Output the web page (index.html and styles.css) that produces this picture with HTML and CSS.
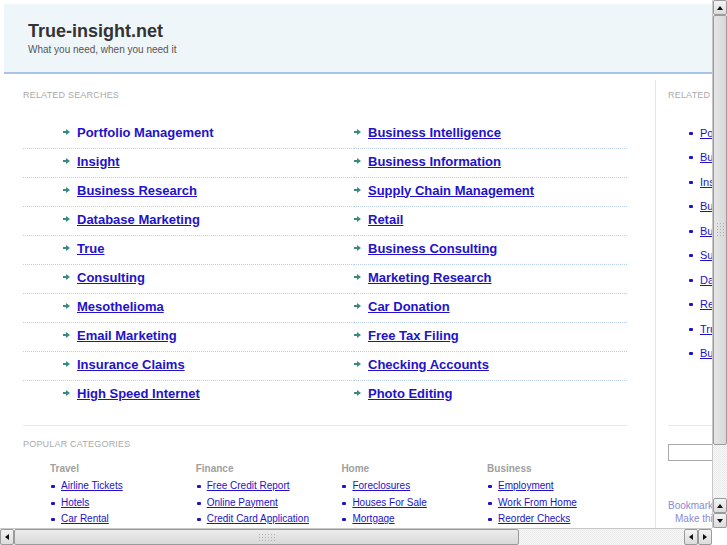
FILE: index.html
```html
<!DOCTYPE html>
<html lang="en">
<head>
    <meta charset="UTF-8">
    <title>True-insight.net</title>
    <link rel="stylesheet" href="styles.css">
</head>
<body>
    <div class="page">
        <div class="header">
            <h1>True-insight.net</h1>
            <p>What you need, when you need it</p>
        </div>
        <div class="main">
            <div class="content">
                <h2 class="label">Related Searches</h2>
                <ul class="searches">
                    <li><svg class="arrow" viewBox="0 0 7 6"><path d="M0 2h3V0l4 3-4 3V4H0z"/></svg><a class="active" href="#">Portfolio Management</a></li>
                    <li><svg class="arrow" viewBox="0 0 7 6"><path d="M0 2h3V0l4 3-4 3V4H0z"/></svg><a href="#">Business Intelligence</a></li>
                    <li><svg class="arrow" viewBox="0 0 7 6"><path d="M0 2h3V0l4 3-4 3V4H0z"/></svg><a href="#">Insight</a></li>
                    <li><svg class="arrow" viewBox="0 0 7 6"><path d="M0 2h3V0l4 3-4 3V4H0z"/></svg><a href="#">Business Information</a></li>
                    <li><svg class="arrow" viewBox="0 0 7 6"><path d="M0 2h3V0l4 3-4 3V4H0z"/></svg><a href="#">Business Research</a></li>
                    <li><svg class="arrow" viewBox="0 0 7 6"><path d="M0 2h3V0l4 3-4 3V4H0z"/></svg><a href="#">Supply Chain Management</a></li>
                    <li><svg class="arrow" viewBox="0 0 7 6"><path d="M0 2h3V0l4 3-4 3V4H0z"/></svg><a href="#">Database Marketing</a></li>
                    <li><svg class="arrow" viewBox="0 0 7 6"><path d="M0 2h3V0l4 3-4 3V4H0z"/></svg><a href="#">Retail</a></li>
                    <li><svg class="arrow" viewBox="0 0 7 6"><path d="M0 2h3V0l4 3-4 3V4H0z"/></svg><a href="#">True</a></li>
                    <li><svg class="arrow" viewBox="0 0 7 6"><path d="M0 2h3V0l4 3-4 3V4H0z"/></svg><a href="#">Business Consulting</a></li>
                    <li><svg class="arrow" viewBox="0 0 7 6"><path d="M0 2h3V0l4 3-4 3V4H0z"/></svg><a href="#">Consulting</a></li>
                    <li><svg class="arrow" viewBox="0 0 7 6"><path d="M0 2h3V0l4 3-4 3V4H0z"/></svg><a href="#">Marketing Research</a></li>
                    <li><svg class="arrow" viewBox="0 0 7 6"><path d="M0 2h3V0l4 3-4 3V4H0z"/></svg><a href="#">Mesothelioma</a></li>
                    <li><svg class="arrow" viewBox="0 0 7 6"><path d="M0 2h3V0l4 3-4 3V4H0z"/></svg><a href="#">Car Donation</a></li>
                    <li><svg class="arrow" viewBox="0 0 7 6"><path d="M0 2h3V0l4 3-4 3V4H0z"/></svg><a href="#">Email Marketing</a></li>
                    <li><svg class="arrow" viewBox="0 0 7 6"><path d="M0 2h3V0l4 3-4 3V4H0z"/></svg><a href="#">Free Tax Filing</a></li>
                    <li><svg class="arrow" viewBox="0 0 7 6"><path d="M0 2h3V0l4 3-4 3V4H0z"/></svg><a href="#">Insurance Claims</a></li>
                    <li><svg class="arrow" viewBox="0 0 7 6"><path d="M0 2h3V0l4 3-4 3V4H0z"/></svg><a href="#">Checking Accounts</a></li>
                    <li class="last"><svg class="arrow" viewBox="0 0 7 6"><path d="M0 2h3V0l4 3-4 3V4H0z"/></svg><a href="#">High Speed Internet</a></li>
                    <li class="last"><svg class="arrow" viewBox="0 0 7 6"><path d="M0 2h3V0l4 3-4 3V4H0z"/></svg><a href="#">Photo Editing</a></li>
                </ul>

                <div class="categories">
                    <h2 class="label">Popular Categories</h2>
                    <div class="cat-grid">
                        <div class="cat">
                            <h3>Travel</h3>
                            <ul>
                                <li><a href="#">Airline Tickets</a></li>
                                <li><a href="#">Hotels</a></li>
                                <li><a href="#">Car Rental</a></li>
                            </ul>
                        </div>
                        <div class="cat">
                            <h3>Finance</h3>
                            <ul>
                                <li><a href="#">Free Credit Report</a></li>
                                <li><a href="#">Online Payment</a></li>
                                <li><a href="#">Credit Card Application</a></li>
                            </ul>
                        </div>
                        <div class="cat">
                            <h3>Home</h3>
                            <ul>
                                <li><a href="#">Foreclosures</a></li>
                                <li><a href="#">Houses For Sale</a></li>
                                <li><a href="#">Mortgage</a></li>
                            </ul>
                        </div>
                        <div class="cat">
                            <h3>Business</h3>
                            <ul>
                                <li><a href="#">Employment</a></li>
                                <li><a href="#">Work From Home</a></li>
                                <li><a href="#">Reorder Checks</a></li>
                            </ul>
                        </div>
                    </div>
                </div>
            </div>

            <div class="sidebar">
                <h2 class="label">Related Searches</h2>
                <ul class="side-list">
                    <li><a href="#">Portfolio Management</a></li>
                    <li><a href="#">Business Intelligence</a></li>
                    <li><a href="#">Insight</a></li>
                    <li><a href="#">Business Information</a></li>
                    <li><a href="#">Business Research</a></li>
                    <li><a href="#">Supply Chain Management</a></li>
                    <li><a href="#">Database Marketing</a></li>
                    <li><a href="#">Retail</a></li>
                    <li><a href="#">True</a></li>
                    <li><a href="#">Business Consulting</a></li>
                </ul>
                <div class="search-box">
                    <input type="text">
                </div>
                <div class="bookmark">
                    <a href="#">Bookmark this page</a>
                    <a class="home" href="#">Make this your homepage</a>
                </div>
            </div>
        </div>
    </div>

    <!-- fake window scrollbars -->
    <div class="vscroll">
        <span class="btn up"></span>
        <span class="thumb"><i class="grip"></i></span>
        <span class="trough"></span>
        <span class="btn up"></span>
        <span class="btn down"></span>
    </div>
    <div class="hscroll">
        <span class="btn left"></span>
        <span class="thumb"><i class="grip"></i></span>
        <span class="trough"></span>
        <span class="btn left"></span>
        <span class="btn right"></span>
    </div>
    <div class="corner"></div>
</body>
</html>
```

FILE: styles.css
```css
body {
    margin: 0;
    overflow: hidden;
    font-family: "Liberation Sans", Arial, sans-serif;
    background: #ffffff;
    color: #333;
}

ul {
    list-style: none;
    margin: 0;
    padding: 0;
}

a {
    color: #2211cc;
}

.page {
    width: 1000px;
    padding: 4px;
}

/* header */
.header {
    height: 68px;
    background: #eff6f9;
    border-bottom: 2px solid #aac3ea;
    padding-left: 24px;
}

.header h1 {
    margin: 0;
    padding-top: 16px;
    font-size: 18px;
    line-height: 22px;
    color: #333;
}

.header p {
    margin: 1px 0 0;
    font-size: 10px;
    line-height: 13px;
    color: #555;
}

.main {
    display: flex;
    padding-top: 6px;
}

.label {
    margin: 9px 0 0;
    font-size: 9px;
    line-height: 12px;
    font-weight: normal;
    text-transform: uppercase;
    letter-spacing: 0.2px;
    color: #aaa;
}

/* related searches */
.content {
    width: 604px;
    margin-left: 19px;
}

.searches {
    display: grid;
    grid-template-columns: 331px 1fr;
    margin-top: 19px;
}

.searches li {
    display: flex;
    align-items: center;
    height: 16px;
    padding: 4px 0 8px;
    border-bottom: 1px dotted #b9cdea;
}

.searches li:nth-child(odd) {
    padding-left: 40px;
}

.searches li.last {
    border-bottom-color: transparent;
}

.searches a {
    font-size: 13px;
    font-weight: bold;
}

.searches a.active {
    text-decoration: none;
}

.arrow {
    width: 7px;
    height: 6px;
    margin-right: 7px;
    fill: #3a8a80;
}

/* popular categories */
.categories {
    margin-top: 15px;
    border-top: 1px solid #dfe8f4;
    padding-top: 3px;
}

.cat-grid {
    display: grid;
    grid-template-columns: repeat(4, 145.7px);
    margin: 10px 0 0 27px;
}

.cat h3 {
    margin: 0;
    font-size: 10px;
    line-height: 18px;
    color: #a0a0a0;
}

.cat li {
    position: relative;
    padding-left: 11px;
    font-size: 10px;
    line-height: 16.5px;
}

.cat li::before {
    content: "";
    position: absolute;
    left: 1px;
    top: 7px;
    width: 4px;
    height: 3px;
    border-radius: 1px;
    background: #2211cc;
}

/* sidebar */
.sidebar {
    width: 200px;
    margin-left: 28px;
    padding-left: 12px;
    border-left: 1px solid #dbe5f3;
    min-height: 460px;
}

.side-list {
    margin-top: 19.5px;
    padding-left: 21px;
}

.side-list li {
    position: relative;
    padding-left: 11px;
    font-size: 11px;
    line-height: 24.5px;
    white-space: nowrap;
}

.side-list li::before {
    content: "";
    position: absolute;
    left: 0;
    top: 11px;
    width: 4px;
    height: 3px;
    border-radius: 1px;
    background: #2211cc;
}

.search-box {
    margin-top: 59px;
    border-top: 1px solid #dfe8f4;
    padding-top: 18px;
}

.search-box input {
    display: block;
    width: 180px;
    height: 17px;
    box-sizing: border-box;
    border: 1px solid #aaa;
    margin: 0;
}

.bookmark {
    margin-top: 38px;
    font-size: 10px;
    line-height: 13px;
}

.bookmark a {
    display: block;
    color: #8a8ad6;
    text-decoration: none;
}

.bookmark a.home {
    margin-left: 7px;
}

/* scrollbars drawn over the page */
.vscroll,
.hscroll {
    position: fixed;
    display: flex;
    background: repeating-conic-gradient(#eaeaea 0 25%, #f8f8f8 0 50%) 0 0 / 2px 2px;
}

.vscroll {
    top: 0;
    right: 0;
    width: 15px;
    height: 528px;
    flex-direction: column;
    border-left: 1px solid #c8c8c8;
    box-sizing: border-box;
}

.hscroll {
    left: 0;
    bottom: 0;
    width: 712px;
    height: 17px;
    border-top: 1px solid #c8c8c8;
    box-sizing: border-box;
}

.corner {
    position: fixed;
    right: 0;
    bottom: 0;
    width: 15px;
    height: 17px;
    background: #fff;
}

.btn {
    position: relative;
    flex: none;
    box-sizing: border-box;
    border: 1px solid #9a9a9a;
    border-radius: 2px;
    background: linear-gradient(#f4f4f4, #dcdcdc);
}

.vscroll .btn {
    height: 15px;
}

.hscroll .btn {
    width: 14px;
}

.btn::before {
    content: "";
    position: absolute;
    left: 50%;
    top: 50%;
    border: 3px solid transparent;
    transform: translate(-50%, -50%);
}

.btn.up::before {
    border-bottom: 4px solid #111;
    border-top-width: 0;
}

.btn.down::before {
    border-top: 4px solid #111;
    border-bottom-width: 0;
}

.btn.left::before {
    border-right: 4px solid #111;
    border-left-width: 0;
}

.btn.right::before {
    border-left: 4px solid #111;
    border-right-width: 0;
}

.thumb {
    display: flex;
    align-items: center;
    justify-content: center;
    flex: none;
    box-sizing: border-box;
    border: 1px solid #9a9a9a;
    border-radius: 2px;
}

.vscroll .thumb {
    height: 430px;
    background: linear-gradient(90deg, #e6e6e6, #d8d8d8);
}

.hscroll .thumb {
    width: 505px;
    background: linear-gradient(#ececec, #d9d9d9);
}

.trough {
    flex: 1;
}

.grip {
    background: radial-gradient(circle, #b0b0b0 0.6px, transparent 0.8px) 0 0 / 3px 3px;
}

.hscroll .grip {
    width: 18px;
    height: 9px;
}

.vscroll .grip {
    width: 9px;
    height: 16px;
}
```
